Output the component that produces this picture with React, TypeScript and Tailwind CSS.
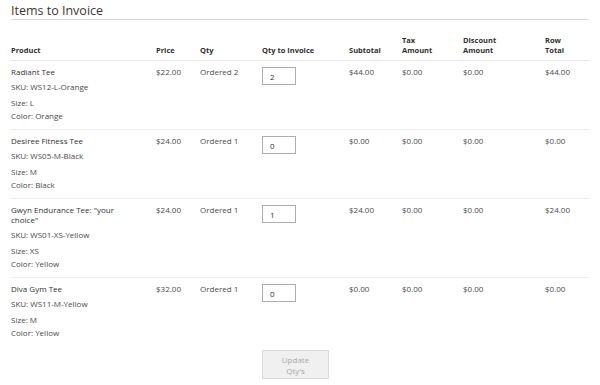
import { useState } from "react";

type Item = {
    name: string;
    sku: string;
    size: string;
    color: string;
    price: string;
    ordered: number;
    qty: string;
    subtotal: string;
    tax: string;
    discount: string;
    total: string;
};

const items: Item[] = [
    { name: "Radiant Tee", sku: "WS12-L-Orange", size: "L", color: "Orange", price: "$22.00", ordered: 2, qty: "2", subtotal: "$44.00", tax: "$0.00", discount: "$0.00", total: "$44.00" },
    { name: "Desiree Fitness Tee", sku: "WS05-M-Black", size: "M", color: "Black", price: "$24.00", ordered: 1, qty: "0", subtotal: "$0.00", tax: "$0.00", discount: "$0.00", total: "$0.00" },
    { name: "Gwyn Endurance Tee: \"your choice\"", sku: "WS01-XS-Yellow", size: "XS", color: "Yellow", price: "$24.00", ordered: 1, qty: "1", subtotal: "$24.00", tax: "$0.00", discount: "$0.00", total: "$24.00" },
    { name: "Diva Gym Tee", sku: "WS11-M-Yellow", size: "M", color: "Yellow", price: "$32.00", ordered: 1, qty: "0", subtotal: "$0.00", tax: "$0.00", discount: "$0.00", total: "$0.00" },
];

const cols = "grid grid-cols-[145px_44px_62px_87px_53px_61px_82px_44px]";

export default function App() {
    const [qtys, setQtys] = useState<string[]>(items.map((i) => i.qty));

    return (
        <div className="w-[600px] h-[385px] bg-white px-[11px] font-['Open_Sans',sans-serif] text-[#303030] overflow-hidden">
            <div className="pt-[3px] pb-[1px] border-b border-[#dcdcdc] text-[12.5px] leading-[15px] text-[#41362f]">
                Items to Invoice
            </div>

            <div className={`${cols} items-end pt-[15px] pb-[5px] border-b border-[#e8e8e8] text-[7.5px] leading-[10px] font-bold text-[#303030]`}>
                <div>Product</div>
                <div>Price</div>
                <div>Qty</div>
                <div>Qty to Invoice</div>
                <div>Subtotal</div>
                <div>Tax<br />Amount</div>
                <div>Discount<br />Amount</div>
                <div>Row<br />Total</div>
            </div>

            {items.map((item, idx) => (
                <div
                    key={item.sku}
                    className={`${cols} items-start pt-[6px] pb-[8px] text-[8px] leading-[11px] text-[#4a4a4a] ${idx < items.length - 1 ? "border-b border-[#ececec]" : ""}`}
                >
                    <div className="pr-[22px]">
                        <div className="leading-[10px] text-[#333]">{item.name}</div>
                        <div className="mt-[4px]">SKU: {item.sku}</div>
                        <div className="mt-[5px]">Size: {item.size}</div>
                        <div className="mt-[2px]">Color: {item.color}</div>
                    </div>
                    <div className="leading-[10px]">{item.price}</div>
                    <div className="leading-[10px]">Ordered {item.ordered}</div>
                    <div>
                        <input
                            className="w-[34px] h-[18px] border border-[#adadad] bg-white pl-[7px] text-[8px] text-[#303030] outline-none"
                            value={qtys[idx]}
                            onChange={(e) => {
                                const next = [...qtys];
                                next[idx] = e.target.value;
                                setQtys(next);
                            }}
                        />
                    </div>
                    <div className="leading-[10px]">{item.subtotal}</div>
                    <div className="leading-[10px]">{item.tax}</div>
                    <div className="leading-[10px]">{item.discount}</div>
                    <div className="leading-[10px]">{item.total}</div>
                </div>
            ))}

            <div className={`${cols} mt-[4px]`}>
                <div className="col-start-4">
                    <button
                        disabled
                        className="w-[67px] h-[29px] bg-[#f0f0f0] border border-[#d9d9d9] text-[8px] leading-[11px] text-[#a8a8a8]"
                    >
                        Update<br />Qty's
                    </button>
                </div>
            </div>
        </div>
    );
}
